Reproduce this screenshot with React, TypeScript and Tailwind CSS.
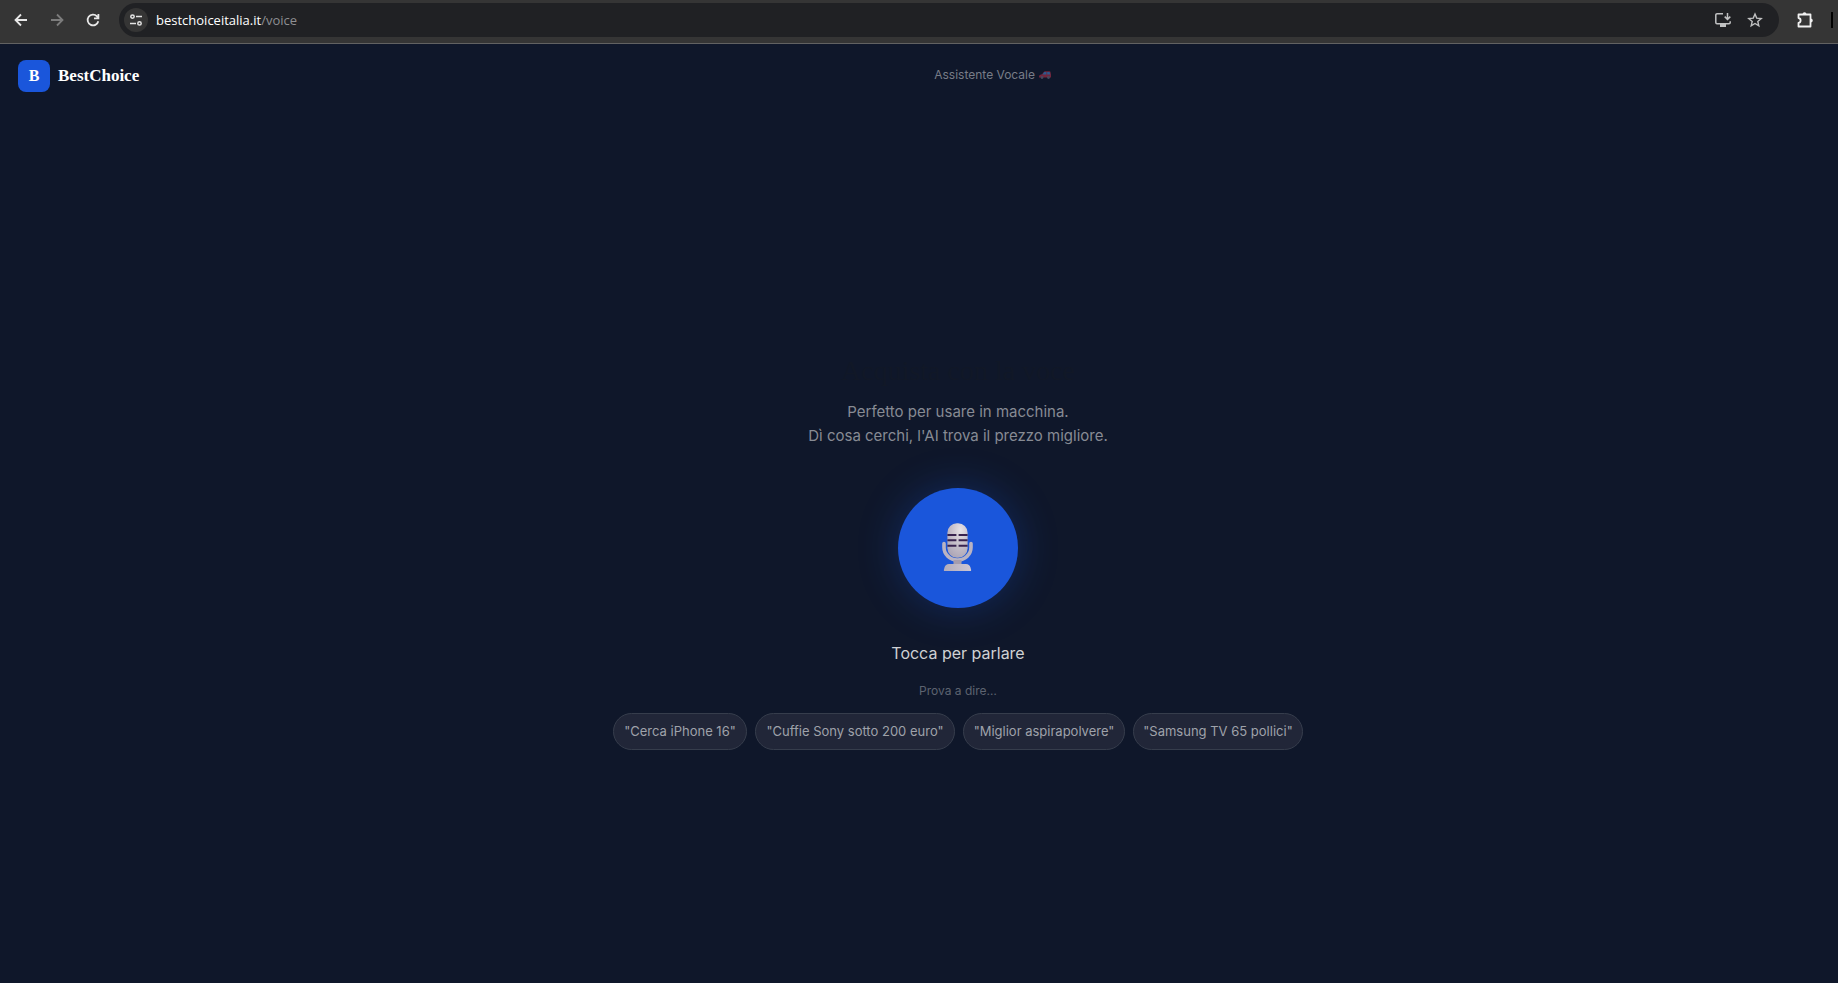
import type { ReactNode } from "react";

const suggestions = [
  { text: '"Cerca iPhone 16"', width: "w-[134px]" },
  { text: '"Cuffie Sony sotto 200 euro"', width: "w-[200px]" },
  { text: '"Miglior aspirapolvere"', width: "w-[162px]" },
  { text: '"Samsung TV 65 pollici"', width: "w-[170px]" },
];

function ToolbarButton({ label, color, children }: { label: string; color: string; children: ReactNode }) {
  return (
    <button type="button" aria-label={label} className={`flex size-6 items-center justify-center ${color}`}>
      {children}
    </button>
  );
}

function BrowserBar() {
  return (
    <div className="flex h-11 items-start border-b border-[#626262] bg-[#353535] pt-[3px] pl-[9px]">
      <div className="flex h-[34px] items-center gap-3">
        <ToolbarButton label="Indietro" color="text-[#e8e8e8]">
          <svg width="14" height="14" viewBox="0 0 14 14" fill="none" stroke="currentColor" strokeWidth="1.8">
            <path d="M13 7H2M7 1.5 1.5 7 7 12.5" />
          </svg>
        </ToolbarButton>
        <ToolbarButton label="Avanti" color="text-[#7c7c7c]">
          <svg width="14" height="14" viewBox="0 0 14 14" fill="none" stroke="currentColor" strokeWidth="1.8">
            <path d="M1 7h11M7 1.5 12.5 7 7 12.5" />
          </svg>
        </ToolbarButton>
        <ToolbarButton label="Ricarica" color="text-[#e8e8e8]">
          <svg width="14" height="14" viewBox="0 0 14 14" fill="none" stroke="currentColor" strokeWidth="1.8">
            <path d="M12.300 8.200A5.400 5.400 0 1 1 11 3.300L12.400 4.800M12.400 1v4.400H8" />
          </svg>
        </ToolbarButton>
      </div>
      <div className="ml-[14px] flex h-[34px] flex-1 items-center rounded-full bg-[#202124] pr-3 pl-[5px]">
        <button type="button" aria-label="Informazioni sul sito" className="flex size-6 items-center justify-center rounded-full bg-[#353535] text-[#e3e3e3]">
          <svg width="12" height="12" viewBox="0 0 12 12" fill="none" stroke="currentColor" strokeWidth="1.5">
            <circle cx="2.500" cy="2.600" r="1.700" />
            <path d="M6 2.600H12M0 9.400h6" />
            <circle cx="9.500" cy="9.400" r="1.700" />
          </svg>
        </button>
        <div className="ml-2 flex-1 font-['Open_Sans',sans-serif] text-[13px] leading-5 text-white">
          bestchoiceitalia.it<span className="text-[#8e8f92]">/voice</span>
        </div>
        <div className="flex gap-2">
          <ToolbarButton label="Installa app" color="text-[#c0c1c2]">
            <svg width="16" height="14" viewBox="0 0 16 14" fill="none" stroke="currentColor" strokeWidth="1.5">
              <path d="M8 .8H2A1.200 1.200 0 0 0 .8 2v7.500A1.200 1.200 0 0 0 2 10.700h12a1.200 1.200 0 0 0 1.200-1.200V8.200M12.500 0v6M9.700 3.600l2.800 2.800 2.800-2.800" />
              <path d="M5 11h6v3H5z" fill="currentColor" stroke="none" />
            </svg>
          </ToolbarButton>
          <ToolbarButton label="Aggiungi ai preferiti" color="text-[#c0c1c2]">
            <svg width="16" height="16" viewBox="0 0 16 16" fill="none" stroke="currentColor" strokeWidth="1.4">
              <path d="M8 2 9.700 6.100 14.200 6.500 10.800 9.400 11.800 13.800 8 11.500 4.200 13.800 5.200 9.400 1.800 6.500 6.300 6.100Z" />
            </svg>
          </ToolbarButton>
        </div>
      </div>
      <div className="ml-[14px] flex h-[34px] items-center">
        <ToolbarButton label="Estensioni" color="text-[#f1f1f1]">
          <svg width="18" height="18" viewBox="0 0 18 18" fill="none" stroke="currentColor" strokeWidth="1.8" strokeLinejoin="round">
            <path d="M2.500 3.500H14.500V15.500H2.500V12C5.300 11.500 5.300 7.500 2.500 7Z" />
            <path d="M6.500 3.500a2 2.300 0 0 1 4 0ZM14.500 7.500a2.300 2 0 0 1 0 4Z" fill="currentColor" stroke="none" />
          </svg>
        </ToolbarButton>
        <span className="mr-[5px] ml-[14px] h-4 w-0.5 bg-black" />
      </div>
    </div>
  );
}

function CarIcon() {
  return (
    <svg width="12" height="8" viewBox="0 0 12 8" className="opacity-60" aria-hidden="true">
      <path d="M0 5.500C0 4 1.500 3.500 3 3.200L5 .7Q5.400.2 6 .2h4.600q.6 0 .8.600L12 3.500v3H0Z" fill="#b3314a" />
      <path d="M3.500 3.600 5.300 1H7.400v2.600ZM8.200 1h2.400l.6 2.600h-3Z" fill="#3f86cf" />
      <circle cx="3" cy="6.500" r="1.400" fill="#6b6a80" />
      <circle cx="9.500" cy="6.500" r="1.400" fill="#6b6a80" />
    </svg>
  );
}

function Microphone() {
  return (
    <svg width="33" height="50" viewBox="0 0 33 50" aria-hidden="true">
      <defs>
        <radialGradient id="capsule" cx="0.65" cy="0.2" r="0.9">
          <stop offset="0" stopColor="#e6e2e6" />
          <stop offset="0.5" stopColor="#c6bfca" />
          <stop offset="1" stopColor="#aaa3b4" />
        </radialGradient>
        <linearGradient id="stand" x1="0" x2="1">
          <stop offset="0" stopColor="#b1abba" />
          <stop offset="1" stopColor="#cdc6d2" />
        </linearGradient>
      </defs>
      <path d="M2 20.500V24.500a13.500 12.500 0 0 0 27 0V20.500" fill="none" stroke="#b9b3c3" strokeWidth="3.600" strokeLinecap="round" />
      <path d="M11.500 37h8v5h-8z" fill="#a49cae" />
      <path d="M2 48Q1.500 47.500 2.500 44.500 3.500 41 7 41H24Q27.500 41 28.500 44.500 29.500 47.500 29 48Z" fill="url(#stand)" />
      <rect x="5.400" y="0.200" width="20.200" height="34.600" rx="9.500" fill="url(#capsule)" />
      <path d="M5.400 12h9M16.600 12h9M5.400 17.200h9M16.600 17.200h9M5.400 22.700h9M16.600 22.700h9" stroke="#38234f" strokeWidth="2.100" />
    </svg>
  );
}

export default function App() {
  return (
    <div className="flex min-h-screen flex-col overflow-x-hidden bg-[#0f172a] font-[Inter,sans-serif]">
      <BrowserBar />
      <header className="flex items-center py-4 pl-[18px]">
        <a href="#" className="flex items-center gap-2">
          <span className="flex size-8 items-center justify-center rounded-lg bg-[#1a56db] font-['Liberation_Serif',serif] text-base font-bold text-white">B</span>
          <span className="font-['Liberation_Serif',serif] text-[17px] font-bold text-white">BestChoice</span>
        </a>
        <div className="flex flex-1 items-center justify-center gap-1 pb-0.5 pl-2 text-xs text-[#777c87]">
          Assistente Vocale <CarIcon />
        </div>
      </header>
      <main className="flex flex-1 flex-col items-center pt-[247px] pl-[78px] text-center">
        <h1 className="font-['Liberation_Serif',serif] text-[28px] leading-8 text-[#111827]">Acquista con la voce</h1>
        <p className="mt-[13px] text-[15px] leading-6 text-[#878b94]">
          Perfetto per usare in macchina.
          <br />
          Dì cosa cerchi, l'AI trova il prezzo migliore.
        </p>
        <button
          type="button"
          aria-label="Parla"
          className="mt-10 flex size-[120px] items-center justify-center rounded-full bg-[#1a56db] shadow-[0_0_40px_rgba(26,86,219,0.3)]"
        >
          <Microphone />
        </button>
        <p className="mt-[33px] text-base leading-6 text-[#cfd1d4]">Tocca per parlare</p>
        <p className="mt-4 text-xs leading-5 text-[#5d6370]">Prova a dire…</p>
        <div className="mt-3 flex flex-wrap justify-center gap-2">
          {suggestions.map((item) => (
            <button
              key={item.text}
              type="button"
              className={`${item.width} h-[37px] rounded-full border border-[#363d4c] bg-[#212638] text-[13px] whitespace-nowrap text-[#9fa2aa]`}
            >
              {item.text}
            </button>
          ))}
        </div>
      </main>
    </div>
  );
}
